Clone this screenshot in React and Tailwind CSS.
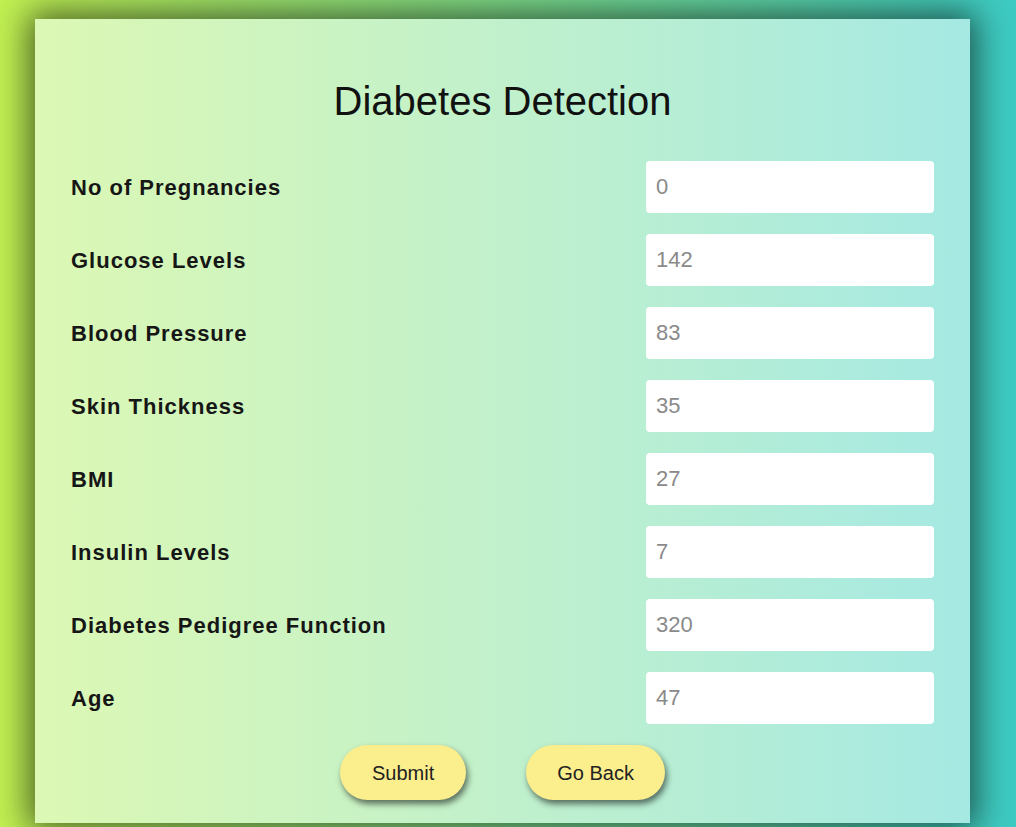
const fields = [
  ['No of Pregnancies', '0'],
  ['Glucose Levels', '142'],
  ['Blood Pressure', '83'],
  ['Skin Thickness', '35'],
  ['BMI', '27'],
  ['Insulin Levels', '7'],
  ['Diabetes Pedigree Function', '320'],
  ['Age', '47'],
];

export default function App() {
  return (
    <div className="h-[827px] overflow-hidden bg-[linear-gradient(to_right,#c1f051,#3ccac3)] pt-[19px] [font-family:'Liberation_Sans',Arial,sans-serif]">
      <div className="mx-[35px] w-[935px] h-[804px] bg-[linear-gradient(to_right,#dcf8b4,#a5e9e3)] shadow-[0_0_32px_6px_rgba(0,0,0,0.6)] px-[36px] pt-[59px]">
        <h1 className="text-center text-[40px] leading-[46px] text-[#111]">Diabetes Detection</h1>
        <form className="mt-[37px] flex flex-col gap-[21px]" onSubmit={e => e.preventDefault()}>
          {fields.map(([label, value]) => (
            <div key={label} className="flex items-center justify-between h-[52px]">
              <label className="text-[22px] font-bold tracking-[1px] text-[#161616]">{label}</label>
              <input
                placeholder={value}
                className="w-[288px] h-[52px] rounded-[4px] bg-white px-[10px] text-[22px] text-[#333] placeholder:text-[#8a8a8a] outline-none"
              />
            </div>
          ))}
          <div className="flex justify-center gap-[60px]">
            <button className="h-[55px] rounded-full bg-[#fbee8d] px-[32px] text-[20px] text-[#222] shadow-[2px_4px_6px_rgba(0,0,0,0.55)]">Submit</button>
            <button className="h-[55px] rounded-full bg-[#fbee8d] px-[31px] text-[20px] text-[#222] shadow-[2px_4px_6px_rgba(0,0,0,0.55)]">Go Back</button>
          </div>
        </form>
      </div>
    </div>
  );
}
